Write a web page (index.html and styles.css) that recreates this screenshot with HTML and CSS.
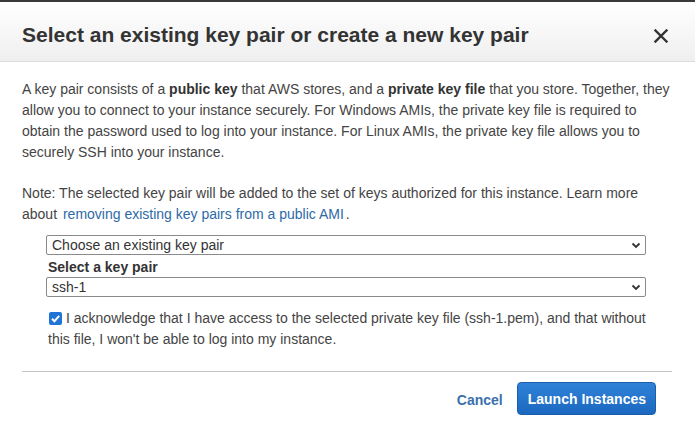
FILE: index.html
```html
<!DOCTYPE html>
<html>
<head>
<meta charset="utf-8">
<link rel="stylesheet" href="styles.css">
</head>
<body>
<div class="modal">
  <div class="header">
    <h1 class="title">Select an existing key pair or create a new key pair</h1>
    <span class="close">
      <svg width="14" height="14" viewBox="0 0 14 14"><path d="M1.5 1.5 L12.5 12.5 M12.5 1.5 L1.5 12.5" stroke="#333" stroke-width="2.4" stroke-linecap="square"/></svg>
    </span>
  </div>
  <div class="body">
    <p class="para">A key pair consists of a <b>public key</b> that AWS stores, and a <b>private key file</b> that you store. Together, they allow you to connect to your instance securely. For Windows AMIs, the private key file is required to obtain the password used to log into your instance. For Linux AMIs, the private key file allows you to securely SSH into your instance.</p>
    <p class="para note">Note: The selected key pair will be added to the set of keys authorized for this instance. Learn more about <a class="link" href="#">removing existing key pairs from a public AMI</a>.</p>
    <div class="form">
      <div class="select">
        <span>Choose an existing key pair</span>
        <svg class="chev" width="10" height="7" viewBox="0 0 10 7"><path d="M1.5 1.5 L5 5 L8.5 1.5" fill="none" stroke="#333" stroke-width="1.8"/></svg>
      </div>
      <div class="label">Select a key pair</div>
      <div class="select">
        <span>ssh-1</span>
        <svg class="chev" width="10" height="7" viewBox="0 0 10 7"><path d="M1.5 1.5 L5 5 L8.5 1.5" fill="none" stroke="#333" stroke-width="1.8"/></svg>
      </div>
      <p class="ack"><span class="check"><svg width="13" height="13" viewBox="0 0 13 13"><path d="M3 6.8 L5.4 9.2 L10.2 3.8" fill="none" stroke="#fff" stroke-width="2"/></svg></span>I acknowledge that I have access to the selected private key file (ssh-1.pem), and that without this file, I won't be able to log into my instance.</p>
    </div>
  </div>
  <div class="footer">
    <a class="cancel" href="#">Cancel</a>
    <button class="launch">Launch Instances</button>
  </div>
</div>
</body>
</html>
```
FILE: styles.css
```css
html, body {
  margin: 0;
  padding: 0;
  background: #fff;
}
.modal {
  width: 695px;
  height: 435px;
  font-family: "Liberation Sans", Arial, sans-serif;
  color: #444;
  overflow: hidden;
}
.header {
  box-sizing: border-box;
  height: 62px;
  border-top: 2px solid #3a3a3a;
  border-bottom: 1px solid #dcdcdc;
  background: linear-gradient(#ffffff, #efefef);
  display: flex;
  align-items: center;
  justify-content: space-between;
  padding: 7px 27px 0 22px;
}
.title {
  margin: 0;
  font-size: 21px;
  font-weight: bold;
  color: #333;
  letter-spacing: 0;
}
.close {
  display: flex;
  margin-top: 1px;
}
.body {
  padding: 17px 22px 0 22px;
}
.para {
  margin: 0;
  font-size: 14px;
  line-height: 21px;
  color: #444;
}
.para b {
  color: #333;
}
.note {
  margin-top: 20px;
}
.link {
  color: #2e6aa8;
  text-decoration: none;
  margin: 0 2px 0 2px;
}
.form {
  padding: 10px 27px 0 24px;
}
.select {
  height: 18px;
  border: 1px solid #8a8a8a;
  border-radius: 2px;
  display: flex;
  align-items: center;
  justify-content: space-between;
  padding: 0 4px 0 5px;
  font-size: 14px;
  color: #333;
}
.chev {
  display: block;
}
.label {
  font-size: 14px;
  font-weight: bold;
  color: #333;
  margin: 3px 0 1px 2px;
  line-height: 18px;
}
.ack {
  margin: 11px 0 0 2px;
  font-size: 14px;
  line-height: 21px;
  color: #444;
}
.check {
  display: inline-block;
  width: 13px;
  height: 13px;
  background: #1f74d6;
  border-radius: 2px;
  vertical-align: -2px;
  margin: 0 4px 0 1px;
}
.check svg {
  display: block;
}
.footer {
  margin: 21px 23px 0 22px;
  border-top: 1px solid #c4c4c4;
  display: flex;
  justify-content: flex-end;
  align-items: center;
  padding: 10px 16px 0 0;
  gap: 14px;
}
.cancel {
  font-size: 14px;
  font-weight: bold;
  color: #3b70ac;
  text-decoration: none;
  margin-top: 2px;
}
.launch {
  height: 33px;
  padding: 0 9px 0 10px;
  border: 1px solid #1a5fae;
  border-radius: 4px;
  background: linear-gradient(#2f82d8, #1b68bf);
  color: #fff;
  font-family: "Liberation Sans", Arial, sans-serif;
  font-size: 14px;
  font-weight: bold;
}
```
